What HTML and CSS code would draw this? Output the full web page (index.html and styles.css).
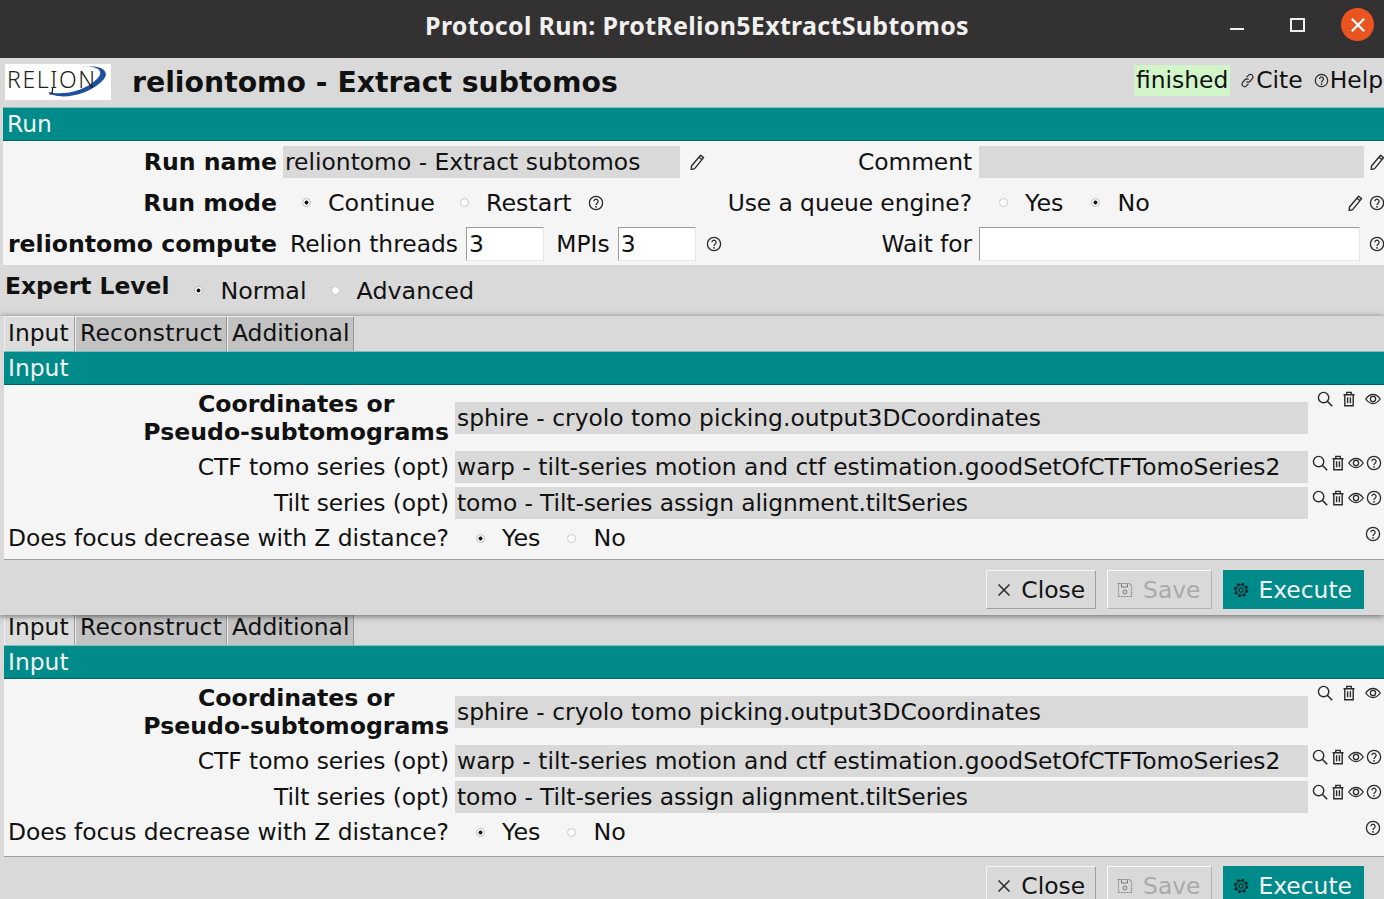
FILE: index.html
```html
<!DOCTYPE html>
<html lang="en">
<head>
<meta charset="utf-8">
<title>Protocol Run: ProtRelion5ExtractSubtomos</title>
<link rel="stylesheet" href="styles.css">
</head>
<body>
<svg class="defs" width="0" height="0" aria-hidden="true">
  <defs>
    <symbol id="i-help" viewBox="0 0 16 16"><circle cx="8" cy="8" r="6.6" fill="none" stroke="currentColor" stroke-width="1.3"/><path d="M5.900 6.300a2.100 2.100 0 1 1 3.400 1.700c-.8.6-1.300 1-1.300 2" fill="none" stroke="currentColor" stroke-width="1.300"/><circle cx="8" cy="11.800" r=".9" fill="currentColor"/></symbol>
    <symbol id="i-pencil" viewBox="0 0 16 16"><path d="M11.600 1.200l3 2.400-9 11-3.400 1 .3-3.600zM10 3.200l3 2.500" fill="none" stroke="currentColor" stroke-width="1.400" stroke-linejoin="round"/></symbol>
    <symbol id="i-search" viewBox="0 0 16 16"><circle cx="6.600" cy="6.600" r="5.200" fill="none" stroke="currentColor" stroke-width="1.400"/><path d="M10.300 10.300l4.900 4.900" stroke="currentColor" stroke-width="1.600"/></symbol>
    <symbol id="i-trash" viewBox="0 0 16 16"><path d="M2.500 3.700h11M5.800 3.500V1.400h4.400v2.100M3.800 3.700v11h8.400v-11M6.600 6.200v6M9.400 6.200v6" fill="none" stroke="currentColor" stroke-width="1.400"/></symbol>
    <symbol id="i-eye" viewBox="0 0 16 16"><path d="M.8 8c2-3 4.500-4.500 7.200-4.500S13.200 5 15.200 8c-2 3-4.500 4.500-7.200 4.500S2.800 11 .8 8z" fill="none" stroke="currentColor" stroke-width="1.300"/><circle cx="8" cy="8" r="2.600" fill="none" stroke="currentColor" stroke-width="1.300"/></symbol>
    <symbol id="i-link" viewBox="0 0 16 16"><path d="M7 4.500l2-2a2.700 2.700 0 0 1 4.300 3.300l-2.500 3a2.700 2.700 0 0 1-4 .2M9 11.500l-2 2a2.700 2.700 0 0 1-4.300-3.300l2.500-3a2.700 2.700 0 0 1 4-.2" fill="none" stroke="currentColor" stroke-width="1.300"/></symbol>
    <symbol id="i-close" viewBox="0 0 16 16"><path d="M2.500 2.500l11 11M13.500 2.500l-11 11" stroke="currentColor" stroke-width="1.500"/></symbol>
    <symbol id="i-save" viewBox="0 0 16 16"><path d="M1.500 1.500h11l2 2v11h-13z" fill="none" stroke="currentColor" stroke-width="1.200" stroke-dasharray="1.200 .8"/><path d="M4.500 1.500v3.500h6V1.500" fill="none" stroke="currentColor" stroke-width="1"/><circle cx="8" cy="10" r="2" fill="none" stroke="currentColor" stroke-width="1"/></symbol>
    <symbol id="i-gear" viewBox="0 0 16 16"><circle cx="8" cy="8" r="5.100" fill="none" stroke="currentColor" stroke-width="1.300"/><circle cx="8" cy="8" r="6.300" fill="none" stroke="currentColor" stroke-width="2" stroke-dasharray="2.470 2.470"/><circle cx="8" cy="8" r="2.100" fill="none" stroke="currentColor" stroke-width="1.200"/></symbol>
  </defs>
</svg>

<header class="titlebar">
  <span class="title">Protocol Run: ProtRelion5ExtractSubtomos</span>
  <span class="win-min"></span>
  <span class="win-max"></span>
  <span class="win-close"><svg class="ico-x" viewBox="0 0 16 16"><path d="M2.500 2.500l11 11M13.500 2.500l-11 11" stroke="currentColor" stroke-width="2" fill="none"/></svg></span>
</header>

<section class="head">
  <div class="logo">
    <svg viewBox="0 0 106 36" width="106" height="36">
      <path d="M43 28C52 37 85 32 99 15 106 5 92 0 76 3 90 1 101 6 92 15 80 27 58 32 43 28z" fill="#1d4f9c"/>
      <text x="2" y="24" class="logo-text" textLength="88" lengthAdjust="spacing">RELION</text>
      <path d="M47.500 24v3c0 2-1.500 3-3 3" fill="none" stroke="#222" stroke-width="1.300"/>
    </svg>
  </div>
  <h1 class="head-title">reliontomo - Extract subtomos</h1>
  <div class="head-right">
    <span class="status">finished</span>
    <span class="link"><svg class="i i-s"><use href="#i-link"/></svg>Cite</span>
    <span class="link"><svg class="i i-s"><use href="#i-help"/></svg>Help</span>
  </div>
</section>

<div class="band run-band">Run</div>
<section class="run">
  <div class="lbl strong">Run name</div>
  <div class="cell">
    <span class="field name-field">reliontomo - Extract subtomos</span>
    <svg class="i pen"><use href="#i-pencil"/></svg>
  </div>
  <div class="lbl">Comment</div>
  <div class="cell">
    <span class="field comment-field"></span>
    <svg class="i pen-r"><use href="#i-pencil"/></svg>
  </div>

  <div class="lbl strong">Run mode</div>
  <div class="cell mode">
    <span class="radio on"></span><span class="opt">Continue</span>
    <span class="radio"></span><span class="opt">Restart</span>
    <svg class="i help-a"><use href="#i-help"/></svg>
  </div>
  <div class="lbl">Use a queue engine?</div>
  <div class="cell queue">
    <span class="radio"></span><span class="opt">Yes</span>
    <span class="radio on"></span><span class="opt">No</span>
    <span class="end">
      <svg class="i"><use href="#i-pencil"/></svg>
      <svg class="i"><use href="#i-help"/></svg>
    </span>
  </div>

  <div class="lbl strong">reliontomo compute</div>
  <div class="cell compute">
    <span class="nw">Relion threads</span><span class="input num">3</span>
    <span class="mpis">MPIs</span><span class="input num">3</span>
    <svg class="i help-b"><use href="#i-help"/></svg>
  </div>
  <div class="lbl">Wait for</div>
  <div class="cell">
    <span class="input wait"></span>
    <span class="end"><svg class="i"><use href="#i-help"/></svg></span>
  </div>
</section>

<section class="expert">
  <strong class="expert-lbl">Expert Level</strong>
  <span class="radio on"></span><span class="opt">Normal</span>
  <span class="radio"></span><span class="opt">Advanced</span>
</section>

<section class="window first">
  <nav class="tabs">
    <span class="tab active">Input</span><span class="tab recon">Reconstruct</span><span class="tab">Additional</span>
  </nav>
  <div class="band">Input</div>
  <div class="form">
    <div class="lbl strong two">Coordinates or<br>Pseudo-subtomograms</div>
    <div class="field top">sphire - cryolo tomo picking.output3DCoordinates</div>
    <div class="tools wide"><svg class="i"><use href="#i-search"/></svg><svg class="i"><use href="#i-trash"/></svg><svg class="i"><use href="#i-eye"/></svg></div>
    <div class="lbl">CTF tomo series (opt)</div>
    <div class="field">warp - tilt-series motion and ctf estimation.goodSetOfCTFTomoSeries2</div>
    <div class="tools"><svg class="i"><use href="#i-search"/></svg><svg class="i"><use href="#i-trash"/></svg><svg class="i"><use href="#i-eye"/></svg><svg class="i"><use href="#i-help"/></svg></div>
    <div class="lbl">Tilt series (opt)</div>
    <div class="field tight">tomo - Tilt-series assign alignment.tiltSeries</div>
    <div class="tools third"><svg class="i"><use href="#i-search"/></svg><svg class="i"><use href="#i-trash"/></svg><svg class="i"><use href="#i-eye"/></svg><svg class="i"><use href="#i-help"/></svg></div>
    <div class="lbl long">Does focus decrease with Z distance?</div>
    <div class="choice"><span class="radio on"></span><span class="opt">Yes</span><span class="radio"></span><span class="opt">No</span></div>
    <div class="tools last"><svg class="i"><use href="#i-help"/></svg></div>
  </div>
  <footer class="actions">
    <span class="btn"><svg class="i"><use href="#i-close"/></svg>Close</span>
    <span class="btn off"><svg class="i"><use href="#i-save"/></svg>Save</span>
    <span class="btn go"><svg class="i"><use href="#i-gear"/></svg>Execute</span>
  </footer>
</section>

<section class="window second">
  <nav class="tabs">
    <span class="tab active">Input</span><span class="tab recon">Reconstruct</span><span class="tab">Additional</span>
  </nav>
  <div class="band">Input</div>
  <div class="form">
    <div class="lbl strong two">Coordinates or<br>Pseudo-subtomograms</div>
    <div class="field top">sphire - cryolo tomo picking.output3DCoordinates</div>
    <div class="tools wide"><svg class="i"><use href="#i-search"/></svg><svg class="i"><use href="#i-trash"/></svg><svg class="i"><use href="#i-eye"/></svg></div>
    <div class="lbl">CTF tomo series (opt)</div>
    <div class="field">warp - tilt-series motion and ctf estimation.goodSetOfCTFTomoSeries2</div>
    <div class="tools"><svg class="i"><use href="#i-search"/></svg><svg class="i"><use href="#i-trash"/></svg><svg class="i"><use href="#i-eye"/></svg><svg class="i"><use href="#i-help"/></svg></div>
    <div class="lbl">Tilt series (opt)</div>
    <div class="field tight">tomo - Tilt-series assign alignment.tiltSeries</div>
    <div class="tools third"><svg class="i"><use href="#i-search"/></svg><svg class="i"><use href="#i-trash"/></svg><svg class="i"><use href="#i-eye"/></svg><svg class="i"><use href="#i-help"/></svg></div>
    <div class="lbl long">Does focus decrease with Z distance?</div>
    <div class="choice"><span class="radio on"></span><span class="opt">Yes</span><span class="radio"></span><span class="opt">No</span></div>
    <div class="tools last"><svg class="i"><use href="#i-help"/></svg></div>
  </div>
  <footer class="actions">
    <span class="btn"><svg class="i"><use href="#i-close"/></svg>Close</span>
    <span class="btn off"><svg class="i"><use href="#i-save"/></svg>Save</span>
    <span class="btn go"><svg class="i"><use href="#i-gear"/></svg>Execute</span>
  </footer>
</section>
</body>
</html>
```
FILE: styles.css
```css
* { box-sizing: border-box; }
html, body { margin: 0; padding: 0; }
body {
  width: 1384px;
  height: 899px;
  overflow: hidden;
  background: #d9d9d9;
  color: #111;
  font-family: "DejaVu Sans", sans-serif;
  font-size: 23.4px;
  line-height: 28px;
}
.defs { display: block; height: 0; }
.i { display: block; width: 16px; height: 16px; flex: none; color: #2a2a2a; }
.nw { white-space: nowrap; }

.titlebar {
  position: relative;
  height: 58px;
  padding-left: 10px;
  background: #333131;
  display: flex;
  align-items: center;
  justify-content: center;
}
.title {
  color: #f0f0ee;
  font-family: "Noto Sans", sans-serif;
  font-weight: 700;
  font-size: 25px;
  letter-spacing: .3px;
  margin-top: -8px;
  white-space: nowrap;
}
.win-min { position: absolute; left: 1230px; top: 28px; width: 14px; height: 2px; background: #eee; }
.win-max { position: absolute; left: 1290px; top: 18px; width: 15px; height: 14px; border: 2px solid #eee; }
.win-close {
  position: absolute; left: 1341px; top: 8px;
  width: 33px; height: 33px; border-radius: 50%;
  background: #e95420; color: #fff;
  display: flex; align-items: center; justify-content: center;
}
.ico-x { width: 18px; height: 18px; }

.head { height: 49px; display: flex; align-items: center; position: relative; }
.logo { width: 106px; height: 36px; margin-left: 5px; margin-top: -1px; background: #fff; flex: none; }
.logo svg { display: block; }
.logo-text { font-family: "Noto Sans", sans-serif; font-size: 23px; font-weight: 300; fill: #222; }
.head-title { margin: 0 0 0 21px; font-size: 28.3px; line-height: 32px; font-weight: 700; color: #111; white-space: nowrap; }
.head-right { margin-left: auto; display: flex; align-items: center; margin-top: -5px; }
.status { background: #d1f5c9; padding: 0 2px; height: 31px; line-height: 31px; margin-right: 10px; }
.link { display: flex; align-items: center; margin-right: 11px; }
.link:last-child { margin-right: 1px; }
.i-s { width: 15px; height: 15px; margin-right: 1px; }

.band {
  height: 34px;
  margin-left: 4px;
  background: #008b8b;
  color: #f2f2f2;
  line-height: 33px;
  padding-left: 4px;
  border-top: 1px solid #7fbfc0;
  border-bottom: 1px solid #04625f;
}
.run-band { margin-left: 3px; line-height: 32px; }

.run {
  margin-left: 3px;
  height: 124px;
  background: #f5f5f5;
  display: grid;
  grid-template-columns: 274px 445px 250px 1fr;
  grid-template-rows: 41px 41px 42px;
}
.lbl { text-align: right; align-self: center; white-space: nowrap; letter-spacing: -.08px; }
.lbl.long { letter-spacing: -.03px; }
.strong { font-weight: 700; font-size: 23.6px; letter-spacing: 0; }
.cell { display: flex; align-items: center; padding-left: 6px; position: relative; }
.field {
  display: block;
  background: #d9d9d9;
  height: 32px;
  line-height: 32px;
  padding-left: 2px;
  white-space: nowrap;
}
.tight { letter-spacing: -.11px; }
.name-field { width: 397px; }
.pen { margin-left: 9px; }
.comment-field { width: 385px; margin-left: 1px; }
.pen-r { margin-left: 5px; }
.radio {
  flex: none; width: 9px; height: 9px; border-radius: 50%;
  background: #fff; border: 1px solid #c6c6c6;
}
.radio.on { background: radial-gradient(circle, #111 0 1.7px, #fff 2.3px); border-color: #bdbdbd; }
.opt { margin-left: 17px; margin-right: 25px; white-space: nowrap; font-size: 23.8px; }
.mode { padding-left: 25px; }
.queue { padding-left: 27px; }
.queue .opt { margin-right: 28px; }
.end { margin-left: auto; display: flex; gap: 6px; }
.help-a { margin-left: -9px; }
.compute { padding-left: 13px; }
.input {
  display: block; height: 34px; line-height: 32px; background: #fff;
  border: 1px solid; border-color: #9c9c9c #e6e6e6 #e6e6e6 #9c9c9c; padding-left: 2px;
}
.num { width: 79px; margin-left: 8px; }
.mpis { margin-left: 12px; }
.help-b { margin-left: 10px; }
.wait { width: 381px; margin-left: 1px; }

.expert { height: 51px; display: flex; align-items: center; padding-left: 5px; }
.expert-lbl { margin-top: -9px; margin-right: 25px; }
.expert .opt { margin-right: 24px; }

.window { position: relative; background: #d9d9d9; }
.first { z-index: 2; box-shadow: 0 1px 6px rgba(0,0,0,.55); height: 299px; }
.second { height: 289px; overflow: hidden; }
.second .tabs { margin-top: -5px; }

.tabs { display: flex; height: 35px; padding-left: 4px; }
.tab {
  height: 35px; padding: 0 4px; line-height: 33px;
  background: #c2c2c2;
  border: 1px solid #eee; border-right-color: #9a9a9a; border-bottom: 0;
}
.tab.active { background: #dcdcdc; width: 71px; padding-left: 3px; }
.tab.recon { letter-spacing: .24px; width: 152px; }

.form {
  margin-left: 4px;
  background: #f5f5f5;
  border-bottom: 1px solid #9f9f9f;
  height: 175px;
  display: grid;
  grid-template-columns: 445px 853px 1fr;
  grid-template-rows: 66px 36px 35px 37px;
  column-gap: 6px;
}
.second .form { height: 178px; }
.form .lbl { align-self: start; line-height: 32px; }
.form .two {
  justify-self: end; text-align: center; line-height: 28px; margin-top: 5px;
}
.form .field { align-self: start; }
.form .top { margin-top: 17px; }
.choice { display: flex; align-items: center; height: 32px; padding-left: 21px; }
.choice .opt { margin-right: 27px; }
.tools { display: flex; gap: 2px; align-items: flex-start; margin-left: -2px; padding-top: 4px; }
.tools.third { padding-top: 3px; }
.tools.wide { gap: 8px; margin-left: 3px; padding-top: 6px; }
.tools.last { justify-content: flex-end; padding-right: 3px; margin-left: 0; }

.actions { height: 55px; display: flex; justify-content: flex-end; gap: 11px; padding: 10px 20px 0 0; }
.second .actions { padding-top: 9px; }
.btn {
  height: 39px; display: flex; align-items: center; gap: 9px; padding: 0 10px 0 9px;
  background: #d9d9d9; border: 1px solid; border-color: #f4f4f4 #9f9f9f #9f9f9f #f4f4f4;
  white-space: nowrap;
}
.off { color: #a9a9a9; border-color: #fafafa #b5b5b5 #b5b5b5 #fafafa; padding-right: 11px; gap: 10px; }
.off .i { color: #777; }
.go { background: #008b8b; color: #f2f2f2; border-color: #008b8b; padding-right: 11px; }
.go .i { color: #0b2b2b; }
```
